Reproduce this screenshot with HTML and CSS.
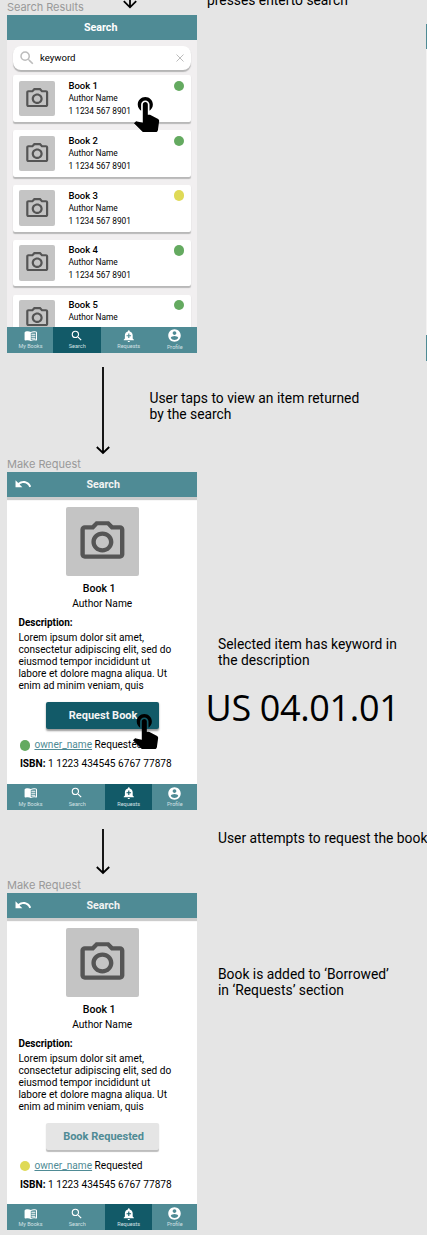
FILE: index.html
```html
<!DOCTYPE html>
<html lang="en">
<head>
<meta charset="utf-8">
<title>Search flow</title>
<link rel="stylesheet" href="styles.css">
</head>
<body>
<svg class="defs" aria-hidden="true">
<symbol id="camera" viewBox="0 0 24 24" preserveAspectRatio="none"><path d="M14.12 4l1.83 2H20v12H4V6h4.05l1.83-2h4.24M15 2H9L7.17 4H4c-1.1 0-2 .9-2 2v12c0 1.1.9 2 2 2h16c1.1 0 2-.9 2-2V6c0-1.1-.9-2-2-2h-3.17L15 2zm-3 7c1.65 0 3 1.35 3 3s-1.35 3-3 3-3-1.35-3-3 1.35-3 3-3m0-2c-2.76 0-5 2.24-5 5s2.24 5 5 5 5-2.24 5-5-2.24-5-5-5z"/></symbol>
<symbol id="tap" viewBox="0 0 24 24"><path d="M9 11.24V7.5C9 6.12 10.12 5 11.5 5S14 6.12 14 7.5v3.74c1.21-.81 2-2.18 2-3.74C16 5.01 13.99 3 11.5 3S7 5.01 7 7.5c0 1.56.79 2.93 2 3.74zm9.84 4.63l-4.54-2.26c-.17-.07-.35-.11-.54-.11H13v-6c0-.83-.67-1.5-1.5-1.5S10 6.67 10 7.5v10.74l-3.43-.72c-.08-.01-.15-.03-.24-.03-.31 0-.59.13-.79.33l-.79.8 4.94 4.94c.27.27.65.44 1.06.44h6.79c.75 0 1.33-.55 1.44-1.28l.75-5.27c.01-.07.02-.14.02-.2 0-.62-.38-1.16-.91-1.38z"/></symbol>
<symbol id="undo" viewBox="0 0 24 24"><path d="M12.5 8c-2.65 0-5.05.99-6.9 2.6L2 7v9h9l-3.62-3.62c1.39-1.16 3.16-1.88 5.12-1.88 3.54 0 6.55 2.31 7.6 5.5l2.37-.78C21.08 11.03 17.15 8 12.5 8z"/></symbol>
<symbol id="reader" viewBox="0 0 24 24"><path d="M13 12h7v1.500h-7zm0-3.500h7V10h-7zm0 7h7V17h-7zM21 4.500c-3.500-.8-6.500-.5-9 1-2.500-1.500-5.500-1.800-9-1-1.300.3-2 .9-2 2V19c0 1.100.9 1.500 2 1.300 3.500-.7 6.500-.5 9 .7 2.500-1.200 5.500-1.400 9-.7 1.100.2 2-.2 2-1.300V6.500c0-1.100-.7-1.700-2-2zm.2 14c-3.300-.6-6.200-.4-9.200.7V7c2.900-1.300 5.900-1.500 9.200-.9v12.400z"/></symbol>
<symbol id="search" viewBox="0 0 24 24"><path d="M15.5 14h-.79l-.28-.27A6.471 6.471 0 0 0 16 9.5 6.5 6.5 0 1 0 9.5 16c1.61 0 3.09-.59 4.23-1.57l.27.28v.79l5 4.99L20.49 19l-4.99-5zm-6 0C7.01 14 5 11.99 5 9.5S7.01 5 9.5 5 14 7.01 14 9.5 11.99 14 9.5 14z"/></symbol>
<symbol id="bell" viewBox="0 0 24 24"><path d="M10.01 21.01c0 1.1.89 1.99 1.99 1.99s1.99-.89 1.99-1.99h-3.98zm8.87-4.19V11c0-3.25-2.25-5.97-5.29-6.69v-.72C13.59 2.71 12.88 2 12 2s-1.59.71-1.59 1.59v.72C7.37 5.03 5.12 7.75 5.12 11v5.82L3 18.94V20h18v-1.06l-2.12-2.12zM16 13.01h-3v3h-2v-3H8V11h3V8h2v3h3v2.01z"/></symbol>
<symbol id="person" viewBox="0 0 24 24"><path d="M12 2C6.48 2 2 6.48 2 12s4.48 10 10 10 10-4.48 10-10S17.52 2 12 2zm0 3c1.66 0 3 1.34 3 3s-1.34 3-3 3-3-1.34-3-3 1.34-3 3-3zm0 14.2c-2.5 0-4.71-1.28-6-3.22.03-1.99 4-3.08 6-3.08 1.99 0 5.97 1.09 6 3.08-1.29 1.94-3.5 3.22-6 3.22z"/></symbol>
</svg>
<main class="canvas">
  <svg class="arrow arrow-top" viewBox="0 0 16 10"><path d="M8 -6V7.300M1.800 1.200L8 7.300L14.200 1.200"/></svg>
  <p class="note note-enter">presses enterto search</p>

  <div class="frame-label label-results">Search Results</div>
  <section class="phone phone-results">
    <header class="bar"><h2>Search</h2></header>
    <div class="results">
      <div class="field"><svg class="field-icon"><use href="#search"/></svg><span>keyword</span><svg class="clear" viewBox="0 0 8 8"><path d="M.5 .5L7.500 7.500M7.500 .5L.5 7.500"/></svg></div>
      <article class="card"><div class="thumb"><svg><use href="#camera"/></svg></div><div class="info"><h3>Book 1</h3><p>Author Name</p><p>1 1234 567 8901</p></div><i class="dot"></i></article>
      <article class="card"><div class="thumb"><svg><use href="#camera"/></svg></div><div class="info"><h3>Book 2</h3><p>Author Name</p><p>1 1234 567 8901</p></div><i class="dot"></i></article>
      <article class="card"><div class="thumb"><svg><use href="#camera"/></svg></div><div class="info"><h3>Book 3</h3><p>Author Name</p><p>1 1234 567 8901</p></div><i class="dot pending"></i></article>
      <article class="card"><div class="thumb"><svg><use href="#camera"/></svg></div><div class="info"><h3>Book 4</h3><p>Author Name</p><p>1 1234 567 8901</p></div><i class="dot"></i></article>
      <article class="card"><div class="thumb"><svg><use href="#camera"/></svg></div><div class="info"><h3>Book 5</h3><p>Author Name</p></div><i class="dot"></i></article>
    </div>
    <nav class="tabs">
      <div class="tab"><svg><use href="#reader"/></svg><span>My Books</span></div>
      <div class="tab active"><svg><use href="#search"/></svg><span>Search</span></div>
      <div class="tab requests"><svg><use href="#bell"/></svg><span>Requests</span></div>
      <div class="tab"><svg class="big"><use href="#person"/></svg><span>Profile</span></div>
    </nav>
  </section>
  <svg class="tap tap-card"><use href="#tap"/></svg>

  <svg class="arrow arrow-long" viewBox="0 0 16 88"><path d="M8 0V86M1.800 80L8 86L14.200 80"/></svg>
  <p class="note note-view">User taps to view an item returned<br>by the search</p>

  <div class="frame-label label-request">Make Request</div>
  <section class="phone phone-request">
    <header class="bar raised"><svg class="back"><use href="#undo"/></svg><h2>Search</h2></header>
    <div class="detail">
      <div class="cover"><svg><use href="#camera"/></svg></div>
      <h3 class="title">Book 1</h3>
      <p class="author">Author Name</p>
      <h4>Description:</h4>
      <p class="description">Lorem ipsum dolor sit amet,<br>consectetur adipiscing elit, sed do<br>eiusmod tempor incididunt ut<br>labore et dolore magna aliqua. Ut<br>enim ad minim veniam, quis</p>
      <div class="button">Request Book</div>
      <p class="owner"><i class="dot"></i><span><u>owner_name</u> Requested</span></p>
      <p class="isbn"><b>ISBN:</b> 1 1223 434545 6767 77878</p>
    </div>
    <nav class="tabs">
      <div class="tab"><svg><use href="#reader"/></svg><span>My Books</span></div>
      <div class="tab"><svg><use href="#search"/></svg><span>Search</span></div>
      <div class="tab requests active"><svg><use href="#bell"/></svg><span>Requests</span></div>
      <div class="tab"><svg class="big"><use href="#person"/></svg><span>Profile</span></div>
    </nav>
  </section>
  <svg class="tap tap-button"><use href="#tap"/></svg>
  <p class="note note-selected">Selected item has keyword in<br>the description</p>
  <p class="story">US 04.01.01</p>

  <svg class="arrow arrow-short" viewBox="0 0 16 46"><path d="M8 0V44M1.800 38L8 44L14.200 38"/></svg>
  <p class="note note-attempt">User attempts to request the book</p>

  <div class="frame-label label-requested">Make Request</div>
  <section class="phone phone-requested">
    <header class="bar raised"><svg class="back"><use href="#undo"/></svg><h2>Search</h2></header>
    <div class="detail">
      <div class="cover"><svg><use href="#camera"/></svg></div>
      <h3 class="title">Book 1</h3>
      <p class="author">Author Name</p>
      <h4>Description:</h4>
      <p class="description">Lorem ipsum dolor sit amet,<br>consectetur adipiscing elit, sed do<br>eiusmod tempor incididunt ut<br>labore et dolore magna aliqua. Ut<br>enim ad minim veniam, quis</p>
      <div class="button done">Book Requested</div>
      <p class="owner"><i class="dot pending"></i><span><u>owner_name</u> Requested</span></p>
      <p class="isbn"><b>ISBN:</b> 1 1223 434545 6767 77878</p>
    </div>
    <nav class="tabs">
      <div class="tab"><svg><use href="#reader"/></svg><span>My Books</span></div>
      <div class="tab"><svg><use href="#search"/></svg><span>Search</span></div>
      <div class="tab requests active"><svg><use href="#bell"/></svg><span>Requests</span></div>
      <div class="tab"><svg class="big"><use href="#person"/></svg><span>Profile</span></div>
    </nav>
  </section>
  <p class="note note-added">Book is added to ‘Borrowed’<br>in ‘Requests’ section</p>

  <div class="neighbor"></div>
</main>
</body>
</html>
```
FILE: styles.css
```css
* { box-sizing: border-box; }
body { margin: 0; background: #e5e5e5; font-family: Roboto, "Liberation Sans", sans-serif; color: #000; }
h2, h3, h4, p { margin: 0; }
svg { display: block; flex: none; }
.defs { display: none; }
.canvas { position: relative; width: 427px; height: 1235px; overflow: hidden; background: #e5e5e5; }

/* Frames and annotations placed on the canvas */
.phone { position: absolute; left: 7.4px; width: 189.6px; height: 337.4px; display: flex; flex-direction: column; overflow: hidden; background: #fff; }
.phone-results { top: 15.2px; background: #f1eff0; }
.phone-request { top: 472.3px; }
.phone-requested { top: 893.1px; }
.frame-label { position: absolute; left: 7px; font: 11px/14px Inter, sans-serif; color: #999; white-space: nowrap; }
.label-results { top: 0; letter-spacing: -.05px; }
.label-request { top: 457px; }
.label-requested { top: 878px; }
.note { position: absolute; font-size: 13.830px; line-height: 16.2px; white-space: nowrap; }
.note-enter { left: 207px; top: -8px; }
.note-view { left: 149.500px; top: 389.500px; }
.note-selected { left: 218px; top: 636px; }
.note-attempt { left: 218px; top: 829.500px; }
.note-added { left: 218px; top: 965.500px; }
.story { position: absolute; left: 205.500px; top: 682.500px; font: 36px/50px "Open Sans", sans-serif; letter-spacing: -.35px; white-space: nowrap; }
.arrow { position: absolute; fill: none; stroke: #000; stroke-width: 1.8; width: 16px; }
.arrow-top { left: 121.700px; top: 0; height: 10px; }
.arrow-long { left: 94.600px; top: 367px; height: 88px; }
.arrow-short { left: 94.600px; top: 829px; height: 46px; }
.tap { position: absolute; width: 40.300px; height: 40.300px; }
.tap-card { left: 125.600px; top: 91.800px; }
.tap-button { left: 125px; top: 709px; }
.neighbor { position: absolute; left: 426px; top: 23.500px; width: 4px; height: 337.500px; background: #f3f2f2; border-top: 25px solid #4f8b95; border-bottom: 26px solid #4f8b95; }

/* App bar */
.bar { flex: none; height: 25px; display: grid; align-items: center; background: #4f8b95; color: #fff; }
.bar > * { grid-area: 1 / 1; }
.bar h2 { text-align: center; font-size: 10.700px; line-height: 14px; font-weight: 700; padding-right: 3px; }
.raised { box-shadow: 0 3px 1px #ccc; color: #f3f3f3; }
.raised h2 { padding-right: 0; padding-left: 2px; }
.back { width: 18.300px; height: 18.300px; margin-left: 7px; margin-bottom: 1px; fill: #fff; }

/* Result list */
.results { flex: 1; min-height: 0; overflow: hidden; padding: 6px 5.800px 0 6px; display: flex; flex-direction: column; gap: 8.300px; }
.field { flex: none; height: 23.500px; margin-bottom: -2.500px; border-radius: 8px; background: #fff; box-shadow: 0 1.500px 1px #b5b5b5; display: flex; align-items: center; padding: 0 7.500px 0 5px; font-size: 9.600px; }
.field span { flex: 1; }
.field-icon { width: 18px; height: 18px; fill: #bcbcbc; margin-right: 3.500px; }
.clear { width: 8px; height: 8px; stroke: #bcbcbc; stroke-width: 1; fill: none; }
.card { flex: none; height: 46.500px; border-radius: 2px; background: #fff; box-shadow: 0 1.500px 1px #b8b8b8; display: flex; padding: 5.300px 7px 0 5.900px; }
.thumb { flex: none; width: 35.700px; height: 35.700px; border-radius: 2px; background: #c4c4c4; display: grid; place-items: center; }
.thumb svg { width: 26.400px; height: 25.300px; fill: #555; }
.info { flex: 1; margin-left: 13.500px; }
.info h3 { font-size: 9.500px; line-height: 12px; font-weight: 500; margin-top: -.8px; }
.info p { font-size: 8.350px; line-height: 13px; white-space: nowrap; }
.dot { flex: none; width: 10.400px; height: 10.400px; border-radius: 50%; background: #64aa60; }
.pending { background: #dfda57; }

/* Book detail */
.detail { flex: 1; padding: 10.200px 11px 0; }
.cover { width: 73px; height: 68.500px; margin-left: 47.600px; border-radius: 2px; background: #c4c4c4; display: grid; place-items: center; }
.cover svg { width: 52.800px; height: 50px; fill: #555; }
.title { font-size: 10.600px; line-height: 14px; font-weight: 500; text-align: center; margin-top: 6px; padding-right: 6px; }
.author { font-size: 10.200px; line-height: 14px; text-align: center; margin-top: .8px; }
.detail h4 { font-size: 10px; line-height: 12px; font-weight: 700; margin-top: 6.200px; }
.description { font-size: 10.120px; line-height: 12px; margin-top: 3px; white-space: nowrap; }
.button { width: 113px; height: 26.500px; margin: 10.500px 0 0 27.700px; border-radius: 2px; background: #125a68; color: #f4f4f4; box-shadow: 0 1.500px 2px #999; display: grid; place-items: center; font-size: 11px; font-weight: 700; padding-left: 1px; }
.done { background: #e5e5e5; color: #4f8b95; box-shadow: 0 1.500px 1px #bdbdbd; padding-left: 2px; }
.owner { display: flex; align-items: center; gap: 4.200px; margin-top: 9.500px; padding-left: 1.500px; font-size: 10.120px; line-height: 14px; white-space: nowrap; }
.owner u { color: #4f8b95; }
.isbn { margin-top: 4.500px; padding-left: 1.500px; font-size: 10.120px; line-height: 14px; white-space: nowrap; }

/* Bottom navigation */
.tabs { flex: none; height: 26px; display: flex; background: #4f8b95; position: relative; z-index: 1; }
.tab { width: 46.100px; padding-top: 2.500px; display: flex; flex-direction: column; align-items: center; color: #f5f5f5; font-size: 5.500px; }
.tab:nth-child(2) { width: 47.500px; }
.requests { width: 47.500px; margin-left: 4px; }
.tab:last-child { width: 44.500px; }
.tab svg { width: 13.600px; height: 13.600px; fill: #fff; }
.tab .big { width: 15px; height: 15px; margin: -.7px 0; }
.tab span { line-height: 7px; margin-top: .8px; color: #d4e1e4; }
.active { background: #125a68; }
```
